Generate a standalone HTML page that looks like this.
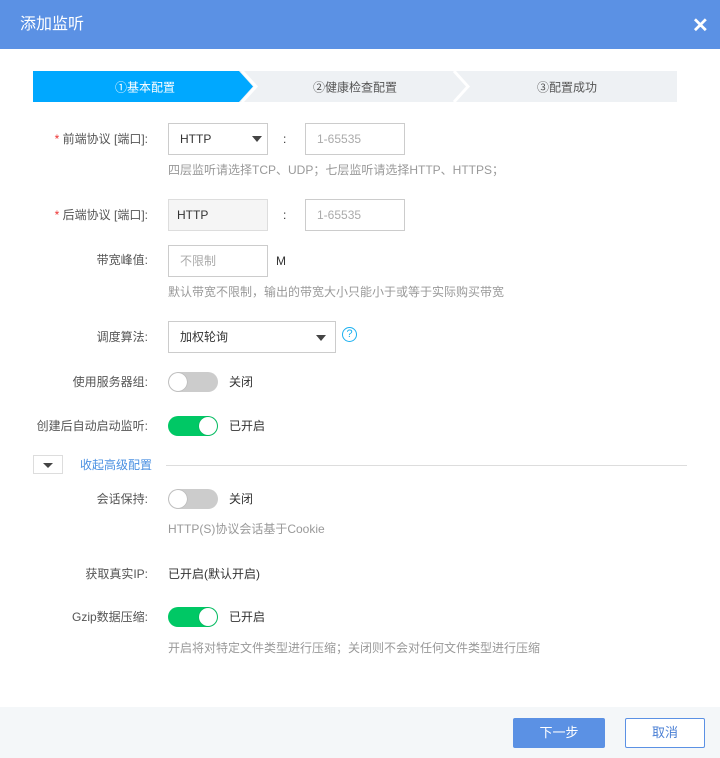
<!DOCTYPE html>
<html><head><meta charset="utf-8"><style>
*{margin:0;padding:0;box-sizing:border-box}
body{width:720px;height:758px;background:#fff;font-family:"Liberation Sans","Noto Sans CJK SC",sans-serif;font-size:12px;color:#333;position:relative;overflow:hidden}
.a{position:absolute}
.hd{left:0;top:0;width:720px;height:49px;background:#5b91e4;color:#fff;font-size:16px;line-height:49px;padding-left:20px}
.lbl{right:572px;width:160px;text-align:right;color:#555;line-height:16px}
.lbl b{color:#e33;font-weight:normal}
.box{border:1px solid #ccc;background:#fff;height:32px;line-height:30px;padding-left:11px}
.ph{color:#aaa}
.hint{left:168px;color:#999;line-height:16px}
.tg{width:50px;height:20px;border-radius:10px;background:#ccc}
.tg i{position:absolute;top:1px;left:1px;width:18px;height:18px;border-radius:50%;background:#fff;box-shadow:0 0 1px rgba(0,0,0,.4)}
.tg.on{background:#00c865}.tg.on i{left:31px}
.tt{left:229px;line-height:16px;color:#333}
.tri{width:0;height:0;border-left:5px solid transparent;border-right:5px solid transparent;border-top:6px solid #444}
</style></head><body>
<div class="a hd">添加监听</div>
<div class="a" style="left:692px;top:17px;color:#fff;font-size:20px;font-weight:bold;line-height:18px">✕</div>
<svg class="a" style="left:33px;top:71px" width="644" height="31">
<rect x="0" y="0" width="644" height="31" fill="#eef1f4"/>
<polygon points="0,0 206,0 220,15.5 206,31 0,31" fill="#00a8ff"/>
<polyline points="209,0 223,15.5 209,31" fill="none" stroke="#fff" stroke-width="3"/>
<polyline points="421,0 435,15.5 421,31" fill="none" stroke="#fff" stroke-width="3"/>
<text x="112" y="20.5" fill="#fff" font-size="12" text-anchor="middle" font-family="Liberation Sans,Noto Sans CJK SC,sans-serif">①基本配置</text>
<text x="322" y="20.5" fill="#555" font-size="12" text-anchor="middle" font-family="Liberation Sans,Noto Sans CJK SC,sans-serif">②健康检查配置</text>
<text x="534" y="20.5" fill="#555" font-size="12" text-anchor="middle" font-family="Liberation Sans,Noto Sans CJK SC,sans-serif">③配置成功</text>
</svg>

<div class="a lbl" style="top:131px"><b>* </b>前端协议 [端口]:</div>
<div class="a box" style="left:168px;top:123px;width:100px">HTTP</div>
<div class="a tri" style="left:252px;top:136px"></div>
<div class="a" style="left:283px;top:131px;line-height:16px">:</div>
<div class="a box ph" style="left:305px;top:123px;width:100px">1-65535</div>
<div class="a hint" style="top:162px">四层监听请选择TCP、UDP；七层监听请选择HTTP、HTTPS；</div>

<div class="a lbl" style="top:207px"><b>* </b>后端协议 [端口]:</div>
<div class="a box" style="left:168px;top:199px;width:100px;background:#f5f5f5;border-color:#ddd;padding-left:8px">HTTP</div>
<div class="a" style="left:283px;top:207px;line-height:16px">:</div>
<div class="a box ph" style="left:305px;top:199px;width:100px">1-65535</div>

<div class="a lbl" style="top:252px">带宽峰值:</div>
<div class="a box ph" style="left:168px;top:245px;width:100px">不限制</div>
<div class="a" style="left:276px;top:253px;line-height:16px">M</div>
<div class="a hint" style="top:284px">默认带宽不限制，输出的带宽大小只能小于或等于实际购买带宽</div>

<div class="a lbl" style="top:329px">调度算法:</div>
<div class="a box" style="left:168px;top:321px;width:168px">加权轮询</div>
<div class="a tri" style="left:316px;top:335px"></div>
<div class="a" style="left:342px;top:327px;width:15px;height:15px;border:1.5px solid #1ab0f0;border-radius:50%;color:#1ab0f0;font-size:11px;line-height:12px;text-align:center">?</div>

<div class="a lbl" style="top:374px">使用服务器组:</div>
<div class="a tg" style="left:168px;top:372px"><i></i></div>
<div class="a tt" style="top:374px">关闭</div>

<div class="a lbl" style="top:418px">创建后自动启动监听:</div>
<div class="a tg on" style="left:168px;top:416px"><i></i></div>
<div class="a tt" style="top:418px">已开启</div>

<div class="a" style="left:33px;top:455px;width:30px;height:19px;border:1px solid #ddd"></div>
<div class="a tri" style="left:43px;top:463px;border-top-width:5px"></div>
<div class="a" style="left:80px;top:457px;color:#4a90e2;line-height:16px">收起高级配置</div>
<div class="a" style="left:166px;top:465px;width:521px;height:1px;background:#ddd"></div>

<div class="a lbl" style="top:491px">会话保持:</div>
<div class="a tg" style="left:168px;top:489px"><i></i></div>
<div class="a tt" style="top:491px">关闭</div>
<div class="a hint" style="top:521px">HTTP(S)协议会话基于Cookie</div>

<div class="a lbl" style="top:566px">获取真实IP:</div>
<div class="a" style="left:168px;top:566px;line-height:16px">已开启(默认开启)</div>

<div class="a lbl" style="top:609px">Gzip数据压缩:</div>
<div class="a tg on" style="left:168px;top:607px"><i></i></div>
<div class="a tt" style="top:609px">已开启</div>
<div class="a hint" style="top:640px">开启将对特定文件类型进行压缩；关闭则不会对任何文件类型进行压缩</div>

<div class="a" style="left:0;top:707px;width:720px;height:51px;background:#f4f7f9"></div>
<div class="a" style="left:513px;top:718px;width:92px;height:30px;background:#5b91e4;color:#fff;text-align:center;line-height:30px;font-size:13px;border-radius:2px">下一步</div>
<div class="a" style="left:625px;top:718px;width:80px;height:30px;background:#fff;border:1px solid #5b91e4;color:#4a7fd4;text-align:center;line-height:28px;font-size:13px;border-radius:2px">取消</div>
</body></html>
